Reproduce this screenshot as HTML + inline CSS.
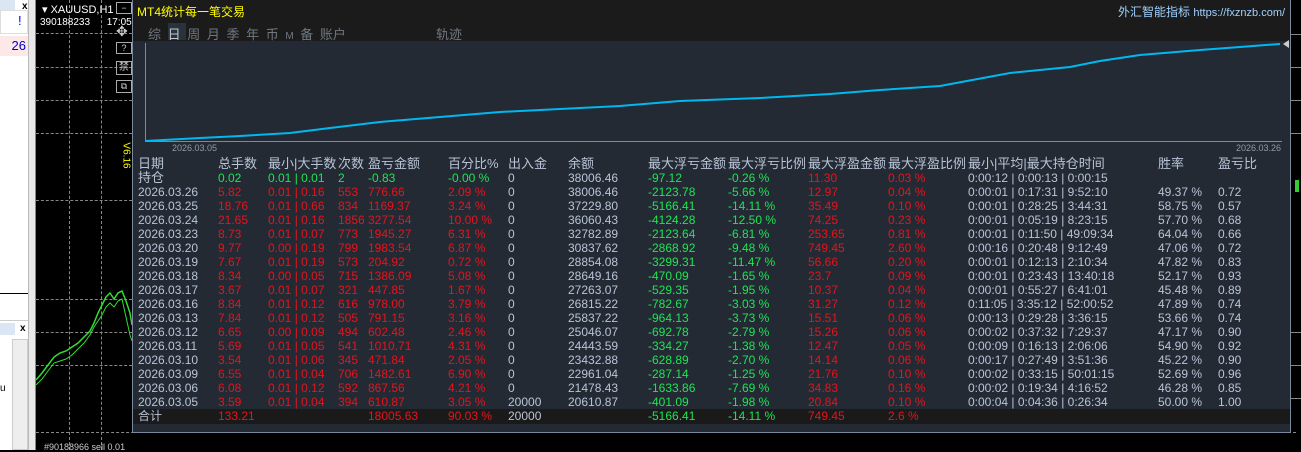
<!DOCTYPE html>
<html><head><meta charset="utf-8"><style>
*{margin:0;padding:0;box-sizing:border-box}
body{width:1301px;height:450px;background:#000;position:relative;overflow:hidden;font-family:"Liberation Sans","Noto Sans CJK SC",sans-serif;font-size:12px}
.a{position:absolute;white-space:nowrap}
.row{position:absolute;left:133px;width:1158px;height:14px;line-height:14px;color:#b8c4d6}
.row span{position:absolute;top:0}
.r{color:#e5141c}.g{color:#1fe454}
.dash{position:absolute;border-left:1px dashed #888}
.hd{position:absolute;border-top:1px dashed #888}
</style></head><body>
<!-- left white pane -->
<div class="a" style="left:0;top:0;width:28px;height:450px;background:#fff"></div>
<div class="a" style="left:0;top:0;width:15px;height:10px;background:#dbe6f4"></div>
<div class="a" style="left:22px;top:1px;font-size:10px;font-weight:bold">x</div>
<div class="a" style="left:0;top:10px;width:28px;height:24px;border:1px solid #ddd;background:#fff"></div>
<div class="a" style="left:18px;top:13px;color:#00f;font-size:13px">!</div>
<div class="a" style="left:0;top:36px;width:28px;height:20px;background:#fde8e8"></div>
<div class="a" style="left:0;top:38px;color:#0000c0;font-size:13px;width:26px;text-align:right">26</div>
<div class="a" style="left:0;top:293px;width:28px;height:1px;background:#000"></div>
<div class="a" style="left:0;top:320px;width:28px;height:1px;background:#ccc"></div>
<div class="a" style="left:0;top:323px;width:15px;height:12px;background:#dbe6f4"></div>
<div class="a" style="left:20px;top:323px;font-size:10px;font-weight:bold">x</div>
<div class="a" style="left:12px;top:339px;width:16px;height:111px;border:1px solid #ccc;background:#eee"></div>
<div class="a" style="left:0;top:383px;font-size:10px">u</div>
<div class="a" style="left:28px;top:0;width:8px;height:450px;background:#e8e8e8;border-left:1px solid #bbb;border-right:1px solid #888"></div>
<!-- chart dashes -->
<div class="dash" style="left:69px;top:0;height:450px"></div>
<div class="dash" style="left:101px;top:0;height:450px"></div>
<div class="hd" style="left:36px;top:33px;width:96px"></div>
<div class="hd" style="left:36px;top:67px;width:96px"></div>
<div class="hd" style="left:36px;top:100px;width:96px"></div>
<div class="hd" style="left:36px;top:133px;width:96px"></div>
<div class="hd" style="left:36px;top:200px;width:96px"></div>
<div class="hd" style="left:36px;top:299px;width:96px"></div>
<div class="hd" style="left:36px;top:332px;width:96px"></div>
<div class="hd" style="left:36px;top:365px;width:96px"></div>
<div class="hd" style="left:36px;top:432px;width:1260px"></div>
<svg class="a" style="left:36px;top:285px" width="96" height="100">
<polyline fill="none" stroke="#3d3" stroke-width="1.5" points="0,95 6,88 12,80 18,72 24,68 30,66 36,62 42,58 48,52 54,46 58,38 62,28 66,20 70,12 74,8 78,14 82,8 86,6 90,16 94,28 96,40"/>
<polyline fill="none" stroke="#3d3" stroke-width="1" points="0,100 6,94 12,86 18,78 24,76 30,74 36,70 42,64 48,58 54,50 58,42 62,36 66,30 70,22 74,18 78,22 82,16 86,14 90,32 94,50 96,56"/>
</svg>
<div class="a" style="left:42px;top:3px;color:#fff;font-size:11px">▾ XAUUSD,H1</div>
<div class="a" style="left:40px;top:17px;color:#fff;font-size:10px">390188233 &nbsp;&nbsp;&nbsp;&nbsp;&nbsp;17:05:18</div>
<div class="a" style="left:44px;top:442px;color:#ccc;font-size:9px">#90188966 sell 0.01</div>
<div class="a" style="left:113px;top:150px;color:#ff0;font-size:10px;transform:rotate(90deg)">V6.16</div>
<div class="a" style="left:116px;top:2px;width:16px;height:12px;border:1px solid #aaa;color:#ccc;font-size:9px;text-align:center;line-height:10px;background:#000">−</div>
<div class="a" style="left:116px;top:23px;color:#ccc;font-size:14px">✥</div>
<div class="a" style="left:116px;top:42px;width:16px;height:12px;border:1px solid #aaa;color:#ccc;font-size:9px;text-align:center;line-height:10px">?</div>
<div class="a" style="left:116px;top:61px;width:16px;height:14px;border:1px solid #aaa;color:#ccc;font-size:10px;text-align:center;line-height:12px">禁</div>
<div class="a" style="left:116px;top:80px;width:16px;height:13px;border:1px solid #aaa;color:#ccc;font-size:9px;text-align:center;line-height:11px">⧉</div>
<!-- panel -->
<div class="a" style="left:132px;top:0;width:1159px;height:433px;background:#232a34;border-left:1px solid #7a8a9c;border-bottom:1px solid #7a8a9c;border-right:1px solid #7a8a9c"></div>
<div class="a" style="left:133px;top:0;width:1157px;height:41px;background:#1b1b1b"></div>
<div class="a" style="left:137px;top:3px;color:#ff0;font-size:12px">MT4统计每一笔交易</div>
<div class="a" style="left:1118px;top:3px;color:#9fd0ff;font-size:12px">外汇智能指标 <span style="font-size:11px">https://fxznzb.com/</span></div>
<div class="a" style="left:168px;top:23px;width:18px;height:17px;background:#2a323c"></div>
<div class="a" style="left:148px;top:24px;color:#707880;font-size:13px;word-spacing:3px">综 <span style="color:#c0c8d0">日</span> 周 月 季 年 币 <span style="font-size:10px">M</span> 备 账户</div>
<div class="a" style="left:436px;top:24px;color:#707880;font-size:13px">轨迹</div>
<!-- chart -->
<svg class="a" style="left:0;top:0" width="1301" height="160">
<line x1="145.5" y1="43" x2="145.5" y2="142" stroke="#888"/>
<line x1="145" y1="141.5" x2="1282" y2="141.5" stroke="#888"/>
<polyline fill="none" stroke="#00b8f0" stroke-width="2" points="145,141 200,138 240,136 290,133 330,128 380,122 440,117 500,112 560,109 620,106 680,101 760,98 830,94 880,90 940,86 1010,73 1070,67 1100,61 1140,55 1200,50 1240,47 1280,44"/>
<polygon points="1283,44 1289,40 1289,48" fill="#ccc"/>
</svg>
<div class="a" style="left:172px;top:143px;color:#909aa6;font-size:9px">2026.03.05</div>
<div class="a" style="left:1236px;top:143px;color:#909aa6;font-size:9px">2026.03.26</div>
<!-- right strip ticks -->
<div class="a" style="left:1291px;top:34px;width:10px;height:1px;background:#888"></div>
<div class="a" style="left:1291px;top:67px;width:10px;height:1px;background:#888"></div>
<div class="a" style="left:1291px;top:100px;width:10px;height:1px;background:#888"></div>
<div class="a" style="left:1291px;top:133px;width:10px;height:1px;background:#888"></div>
<div class="a" style="left:1295px;top:180px;width:4px;height:12px;background:#3c3"></div>
<div class="a" style="left:1291px;top:332px;width:10px;height:1px;background:#888"></div>
<div class="a" style="left:1291px;top:365px;width:10px;height:1px;background:#888"></div>
<div class="a" style="left:1291px;top:398px;width:10px;height:1px;background:#888"></div>
<!-- total bg -->
<div class="a" style="left:133px;top:409px;width:1157px;height:15px;background:#1a1a1a"></div>
<div id="t"></div>
<script>
const L=[5,85,135,205,235,315,375,435,515,595,675,755,835,1025,1085];
const rows=[
["日期","总手数","最小|大手数","次数","盈亏金额","百分比%","出入金","余额","最大浮亏金额","最大浮亏比例","最大浮盈金额","最大浮盈比例","最小|平均|最大持仓时间","胜率","盈亏比"],
["持仓","0.02","0.01 | 0.01","2","-0.83","-0.00 %","0","38006.46","-97.12","-0.26 %","11.30","0.03 %","0:00:12 | 0:00:13 | 0:00:15","",""],
["2026.03.26","5.82","0.01 | 0.16","553","776.66","2.09 %","0","38006.46","-2123.78","-5.66 %","12.97","0.04 %","0:00:01 | 0:17:31 | 9:52:10","49.37 %","0.72"],
["2026.03.25","18.76","0.01 | 0.66","834","1169.37","3.24 %","0","37229.80","-5166.41","-14.11 %","35.49","0.10 %","0:00:01 | 0:28:25 | 3:44:31","58.75 %","0.57"],
["2026.03.24","21.65","0.01 | 0.16","1856","3277.54","10.00 %","0","36060.43","-4124.28","-12.50 %","74.25","0.23 %","0:00:01 | 0:05:19 | 8:23:15","57.70 %","0.68"],
["2026.03.23","8.73","0.01 | 0.07","773","1945.27","6.31 %","0","32782.89","-2123.64","-6.81 %","253.65","0.81 %","0:00:01 | 0:11:50 | 49:09:34","64.04 %","0.66"],
["2026.03.20","9.77","0.00 | 0.19","799","1983.54","6.87 %","0","30837.62","-2868.92","-9.48 %","749.45","2.60 %","0:00:16 | 0:20:48 | 9:12:49","47.06 %","0.72"],
["2026.03.19","7.67","0.01 | 0.19","573","204.92","0.72 %","0","28854.08","-3299.31","-11.47 %","56.66","0.20 %","0:00:01 | 0:12:13 | 2:10:34","47.82 %","0.83"],
["2026.03.18","8.34","0.00 | 0.05","715","1386.09","5.08 %","0","28649.16","-470.09","-1.65 %","23.7","0.09 %","0:00:01 | 0:23:43 | 13:40:18","52.17 %","0.93"],
["2026.03.17","3.67","0.01 | 0.07","321","447.85","1.67 %","0","27263.07","-529.35","-1.95 %","10.37","0.04 %","0:00:01 | 0:55:27 | 6:41:01","45.48 %","0.89"],
["2026.03.16","8.84","0.01 | 0.12","616","978.00","3.79 %","0","26815.22","-782.67","-3.03 %","31.27","0.12 %","0:11:05 | 3:35:12 | 52:00:52","47.89 %","0.74"],
["2026.03.13","7.84","0.01 | 0.12","505","791.15","3.16 %","0","25837.22","-964.13","-3.73 %","15.51","0.06 %","0:00:13 | 0:29:28 | 3:36:15","53.66 %","0.74"],
["2026.03.12","6.65","0.00 | 0.09","494","602.48","2.46 %","0","25046.07","-692.78","-2.79 %","15.26","0.06 %","0:00:02 | 0:37:32 | 7:29:37","47.17 %","0.90"],
["2026.03.11","5.69","0.01 | 0.05","541","1010.71","4.31 %","0","24443.59","-334.27","-1.38 %","12.47","0.05 %","0:00:09 | 0:16:13 | 2:06:06","54.90 %","0.92"],
["2026.03.10","3.54","0.01 | 0.06","345","471.84","2.05 %","0","23432.88","-628.89","-2.70 %","14.14","0.06 %","0:00:17 | 0:27:49 | 3:51:36","45.22 %","0.90"],
["2026.03.09","6.55","0.01 | 0.04","706","1482.61","6.90 %","0","22961.04","-287.14","-1.25 %","21.76","0.10 %","0:00:02 | 0:33:15 | 50:01:15","52.69 %","0.96"],
["2026.03.06","6.08","0.01 | 0.12","592","867.56","4.21 %","0","21478.43","-1633.86","-7.69 %","34.83","0.16 %","0:00:02 | 0:19:34 | 4:16:52","46.28 %","0.85"],
["2026.03.05","3.59","0.01 | 0.04","394","610.87","3.05 %","20000","20610.87","-401.09","-1.98 %","20.84","0.10 %","0:00:04 | 0:04:36 | 0:26:34","50.00 %","1.00"],
["合计","133.21","","","18005.63","90.03 %","20000","","-5166.41","-14.11 %","749.45","2.6 %","","",""]];
let h="";
rows.forEach((r,i)=>{
 h+=`<div class="row" style="top:${157+i*14}px">`;
 r.forEach((c,j)=>{
  let cl="";
  if(i==1){if([1,2,3,4,5,8,9].includes(j))cl="g";if(j==10||j==11)cl="r";}
  else if(i>1&&i<19){if([1,2,3,4,5,10,11].includes(j))cl="r";if(j==8||j==9)cl="g";}
  else if(i==19){if([1,4,5,6,10,11].includes(j))cl="r";if(j==8||j==9)cl="g";}
  if(i==0)cl="";
  h+=`<span class="${cl}" style="left:${L[j]}px;${i==0||i==1&&j==0||i==19&&j==0?'font-size:13px':''}">${c}</span>`;
 });
 h+="</div>";
});
document.getElementById("t").innerHTML=h;
</script>
</body></html>
